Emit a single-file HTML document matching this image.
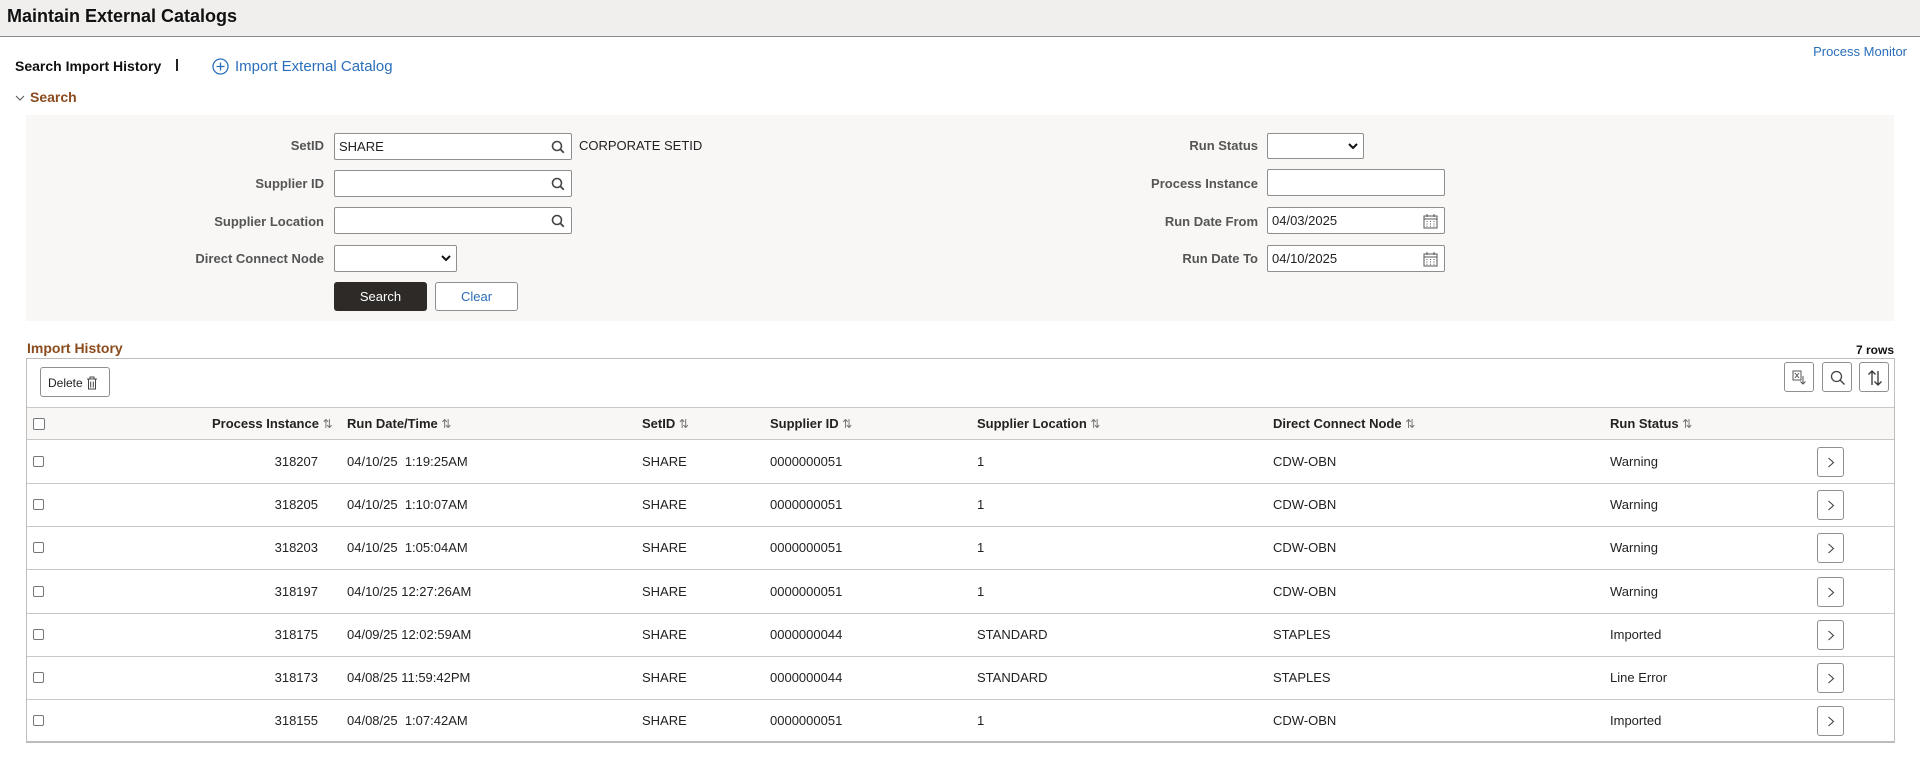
<!DOCTYPE html>
<html><head><meta charset="utf-8"><style>
*{box-sizing:border-box;margin:0;padding:0}
body{width:1920px;height:768px;background:#fff;font-family:"Liberation Sans",Arial,sans-serif;font-size:13px;color:#222;position:relative;overflow:hidden}
.a{position:absolute;white-space:nowrap}
.hdr{left:0;top:0;width:1920px;height:37px;background:#f0efee;border-bottom:1px solid #8a8a8a}
.lbl{font-weight:bold;color:#555;text-align:right;width:300px;font-size:13px}
.inp{background:#fff;border:1px solid #8f8f8f;border-radius:2px;height:27px;padding:5px 4px;font-size:13px;color:#222}
.mag{position:absolute;right:6px;top:6px}
.btn{border:1px solid #8f8f8f;border-radius:3px;background:#fff}
.hl{left:27px;width:1867px;height:1px;background:#c8c8c8}
.th{font-weight:bold;color:#222;top:416px}
.cb{width:11px;height:11px;border:1px solid #777;border-radius:2px;background:#fff}
.srt{color:#777;font-weight:normal;font-size:12px}
</style></head><body>
<div class="a hdr"></div>
<div class="a" style="left:7px;top:6px;font-size:18px;font-weight:bold;color:#111">Maintain External Catalogs</div>
<div class="a" style="left:15px;top:58px;font-size:14px;font-weight:bold;color:#111">Search Import History</div>
<div class="a" style="left:176px;top:59px;width:2px;height:12px;background:#222"></div>
<svg class="a" style="left:212px;top:58px" width="17" height="17" viewBox="0 0 17 17"><circle cx="8.5" cy="8.5" r="7.5" fill="none" stroke="#2a6ebb" stroke-width="1.3"/><path d="M8.5 4.5v8M4.5 8.5h8" stroke="#2a6ebb" stroke-width="1.3"/></svg>
<div class="a" style="left:235px;top:58px;font-size:15px;color:#2a6ebb">Import External Catalog</div>
<div class="a" style="right:13px;top:44px;font-size:13px;color:#2a6ebb">Process Monitor</div>
<svg class="a" style="left:15px;top:94px" width="10" height="8"><path d="M1 2l4 4 4-4" fill="none" stroke="#555" stroke-width="1"/></svg>
<div class="a" style="left:30px;top:89px;font-size:14px;font-weight:bold;color:#8a4b1e">Search</div>
<div class="a" style="left:26px;top:115px;width:1868px;height:206px;background:#f8f7f6"></div>

<div class="a lbl" style="left:24px;top:138px">SetID</div>
<div class="a inp" style="left:334px;top:133px;width:238px">SHARE<svg class="mag" width="14" height="14"><circle cx="6" cy="6" r="4.5" fill="none" stroke="#444" stroke-width="1.6"/><path d="M9.3 9.3l3.5 3.5" stroke="#444" stroke-width="1.8"/></svg></div>
<div class="a" style="left:579px;top:138px">CORPORATE SETID</div>
<div class="a lbl" style="left:24px;top:176px">Supplier ID</div>
<div class="a inp" style="left:334px;top:170px;width:238px"><svg class="mag" width="14" height="14"><circle cx="6" cy="6" r="4.5" fill="none" stroke="#444" stroke-width="1.6"/><path d="M9.3 9.3l3.5 3.5" stroke="#444" stroke-width="1.8"/></svg></div>
<div class="a lbl" style="left:24px;top:214px">Supplier Location</div>
<div class="a inp" style="left:334px;top:207px;width:238px"><svg class="mag" width="14" height="14"><circle cx="6" cy="6" r="4.5" fill="none" stroke="#444" stroke-width="1.6"/><path d="M9.3 9.3l3.5 3.5" stroke="#444" stroke-width="1.8"/></svg></div>
<div class="a lbl" style="left:24px;top:251px">Direct Connect Node</div>
<div class="a inp" style="left:334px;top:245px;width:123px"><svg style="position:absolute;right:5px;top:9px" width="10" height="7"><path d="M1 1l4 4 4-4" fill="none" stroke="#111" stroke-width="2"/></svg></div>
<div class="a" style="left:334px;top:282px;width:93px;height:29px;background:#2d2a27;border-radius:3px;color:#fff;text-align:center;line-height:29px">Search</div>
<div class="a btn" style="left:435px;top:282px;width:83px;height:29px;text-align:center;line-height:27px;color:#2a6ebb">Clear</div>

<div class="a lbl" style="left:958px;top:138px">Run Status</div>
<div class="a inp" style="left:1267px;top:133px;width:97px;height:26px"><svg style="position:absolute;right:5px;top:9px" width="10" height="7"><path d="M1 1l4 4 4-4" fill="none" stroke="#111" stroke-width="2"/></svg></div>
<div class="a lbl" style="left:958px;top:176px">Process Instance</div>
<div class="a inp" style="left:1267px;top:169px;width:178px"></div>
<div class="a lbl" style="left:958px;top:214px">Run Date From</div>
<div class="a inp" style="left:1267px;top:207px;width:178px">04/03/2025<svg class="mag" style="top:5px" width="15" height="16"><rect x="1" y="3" width="13" height="12" fill="none" stroke="#555"/><path d="M1 6h13M4 1v3M11 1v3" stroke="#555"/><path d="M3.5 8.5h1M7 8.5h1M10.5 8.5h1M3.5 11h1M7 11h1M10.5 11h1M3.5 13.2h1M7 13.2h1M10.5 13.2h1" stroke="#555"/></svg></div>
<div class="a lbl" style="left:958px;top:251px">Run Date To</div>
<div class="a inp" style="left:1267px;top:245px;width:178px">04/10/2025<svg class="mag" style="top:5px" width="15" height="16"><rect x="1" y="3" width="13" height="12" fill="none" stroke="#555"/><path d="M1 6h13M4 1v3M11 1v3" stroke="#555"/><path d="M3.5 8.5h1M7 8.5h1M10.5 8.5h1M3.5 11h1M7 11h1M10.5 11h1M3.5 13.2h1M7 13.2h1M10.5 13.2h1" stroke="#555"/></svg></div>

<div class="a" style="left:27px;top:340px;font-size:14px;font-weight:bold;color:#8a4b1e">Import History</div>
<div class="a" style="right:26px;top:343px;font-size:12px;font-weight:bold;color:#111">7 rows</div>
<div class="a" style="left:26px;top:358px;width:1869px;height:385px;border:1px solid #bdbdbd;border-bottom:2px solid #bdbdbd"></div>
<div class="a btn" style="left:40px;top:367px;width:70px;height:30px;font-size:12px;padding:8px 0 0 7px">Delete <svg style="vertical-align:-3px" width="12" height="14"><path d="M1 3h10M4 3V1h4v2M2.5 3.5v9.5h7V3.5M4.7 5.5v6M7.3 5.5v6" fill="none" stroke="#444"/></svg></div>
<div class="a btn" style="left:1784px;top:362px;width:30px;height:30px"><svg style="margin:7px" width="15" height="15"><rect x="1" y="1" width="8" height="9" fill="none" stroke="#555"/><path d="M3 3l4 5M7 3l-4 5M11 6v8M8.5 11.5l2.5 2.5 2.5-2.5" fill="none" stroke="#555"/></svg></div>
<div class="a btn" style="left:1822px;top:362px;width:30px;height:30px"><svg style="margin:7px" width="16" height="16"><circle cx="6.5" cy="6.5" r="5" fill="none" stroke="#444" stroke-width="1.3"/><path d="M10 10l4.5 4.5" stroke="#444" stroke-width="1.4"/></svg></div>
<div class="a btn" style="left:1859px;top:362px;width:30px;height:30px"><svg style="margin:7px" width="16" height="16"><path d="M5 15V1M1.5 4.5L5 1l3.5 3.5M11 1v14M7.5 11.5L11 15l3.5-3.5" fill="none" stroke="#333" stroke-width="1.3"/></svg></div>

<div class="a" style="left:27px;top:407px;width:1867px;height:33px;background:#f8f7f6;border-top:1px solid #c8c8c8;border-bottom:1px solid #c8c8c8"></div>
<div class="a cb" style="left:33px;top:418px;width:12px;height:12px"></div>
<div class="a th" style="left:212px">Process Instance <span class="srt">⇅</span></div>
<div class="a th" style="left:347px">Run Date/Time <span class="srt">⇅</span></div>
<div class="a th" style="left:642px">SetID <span class="srt">⇅</span></div>
<div class="a th" style="left:770px">Supplier ID <span class="srt">⇅</span></div>
<div class="a th" style="left:977px">Supplier Location <span class="srt">⇅</span></div>
<div class="a th" style="left:1273px">Direct Connect Node <span class="srt">⇅</span></div>
<div class="a th" style="left:1610px">Run Status <span class="srt">⇅</span></div>

<div id="rows"></div>
<script>
var d=[["318207","04/10/25&nbsp; 1:19:25AM","0000000051","1","CDW-OBN","Warning"],
["318205","04/10/25&nbsp; 1:10:07AM","0000000051","1","CDW-OBN","Warning"],
["318203","04/10/25&nbsp; 1:05:04AM","0000000051","1","CDW-OBN","Warning"],
["318197","04/10/25 12:27:26AM","0000000051","1","CDW-OBN","Warning"],
["318175","04/09/25 12:02:59AM","0000000044","STANDARD","STAPLES","Imported"],
["318173","04/08/25 11:59:42PM","0000000044","STANDARD","STAPLES","Line Error"],
["318155","04/08/25&nbsp; 1:07:42AM","0000000051","1","CDW-OBN","Imported"]];
var h="";
for(var i=0;i<7;i++){var y=440+i*43.2,t=y+14;var r=d[i];
if(i<6)h+='<div class="a hl" style="top:'+(y+43)+'px"></div>';
h+='<div class="a cb" style="left:33px;top:'+(t+2)+'px"></div>';
h+='<div class="a" style="left:238px;width:80px;text-align:right;top:'+t+'px">'+r[0]+'</div>';
h+='<div class="a" style="left:347px;top:'+t+'px">'+r[1]+'</div>';
h+='<div class="a" style="left:642px;top:'+t+'px">SHARE</div>';
h+='<div class="a" style="left:770px;top:'+t+'px">'+r[2]+'</div>';
h+='<div class="a" style="left:977px;top:'+t+'px">'+r[3]+'</div>';
h+='<div class="a" style="left:1273px;top:'+t+'px">'+r[4]+'</div>';
h+='<div class="a" style="left:1610px;top:'+t+'px">'+r[5]+'</div>';
h+='<div class="a btn" style="left:1817px;top:'+(y+7)+'px;width:27px;height:30px"><svg style="margin:9px 0 0 9px" width="8" height="11"><path d="M1.5 1l5 4.5-5 4.5" fill="none" stroke="#444" stroke-width="1.1"/></svg></div>';}
document.getElementById("rows").innerHTML=h;
</script>
</body></html>
